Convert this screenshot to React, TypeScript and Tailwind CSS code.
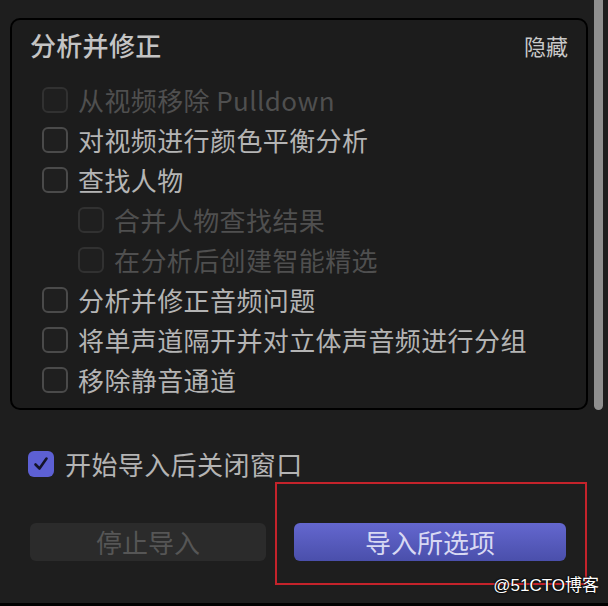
import React from 'react';

type Item = { label: string; disabled?: boolean; sub?: boolean };

const items: Item[] = [
  { label: '从视频移除 Pulldown', disabled: true },
  { label: '对视频进行颜色平衡分析' },
  { label: '查找人物' },
  { label: '合并人物查找结果', disabled: true, sub: true },
  { label: '在分析后创建智能精选', disabled: true, sub: true },
  { label: '分析并修正音频问题' },
  { label: '将单声道隔开并对立体声音频进行分组' },
  { label: '移除静音通道' },
];

const Box = ({ disabled }: { disabled?: boolean }) => (
  <div
    className={
      'w-[26px] h-[26px] shrink-0 rounded-[6px] border-2 bg-[#1f1f1f] ' +
      (disabled ? 'border-[#313131]' : 'border-[#4a4a4a]')
    }
  />
);

const App = () => {
  return (
    <div
      className="relative w-[608px] h-[606px] overflow-hidden bg-[#1e1e1e] border-b-[3px] border-black flex"
      style={{ fontFamily: '"Noto Sans CJK SC", "PingFang SC", sans-serif' }}
    >
      <div className="flex-1 pl-[10px] pr-[6px]">
        {/* analysis panel */}
        <div className="mt-[18px] h-[392px] rounded-[10px] border-2 border-black bg-[#1c1c1c] px-[18px] pt-[12px]">
          <div className="flex items-center justify-between h-[26px]">
            <span className="text-[26px] leading-none font-medium tracking-[0.3px] text-[#c4c4c4]">分析并修正</span>
            <span className="text-[22px] leading-none text-[#c8c8c8]">隐藏</span>
          </div>
          <div className="mt-[22px] pl-[12px]">
            {items.map((item, i) => (
              <div key={i} className={'flex items-center h-[40px] gap-[10px] ' + (item.sub ? 'ml-[36px]' : '')}>
                <Box disabled={item.disabled} />
                <span
                  className={
                    'text-[26px] leading-none whitespace-nowrap tracking-[0.4px] ' +
                    (item.disabled ? 'text-[#4f4f4f]' : 'text-[#b4b4b4]')
                  }
                >
                  {item.label}
                </span>
              </div>
            ))}
          </div>
        </div>

        {/* close window option */}
        <div className="mt-[41px] ml-[18px] flex items-center gap-[11px]">
          <div className="w-[26px] h-[26px] rounded-[6px] bg-[#5d60d4] flex items-center justify-center">
            <svg width="18" height="18" viewBox="0 0 18 18" fill="none">
              <path d="M3.5 9.5 L7.5 13.5 L14.5 3.5" stroke="#14142a" strokeWidth="2.6" strokeLinecap="round" strokeLinejoin="round" />
            </svg>
          </div>
          <span className="text-[26px] leading-none tracking-[0.4px] text-[#b4b4b4]">开始导入后关闭窗口</span>
        </div>

        {/* buttons */}
        <div className="mt-[46px] ml-[20px] flex gap-[28px]">
          <div className="w-[236px] h-[38px] rounded-[6px] bg-[#2b2b2b] flex items-center justify-center text-[26px] leading-none text-[#565656]">
            停止导入
          </div>
          <div className="w-[272px] h-[38px] rounded-[6px] bg-gradient-to-b from-[#6467cf] to-[#4a4fab] flex items-center justify-center text-[26px] leading-none text-[#d8d9f3]">
            导入所选项
          </div>
        </div>
      </div>

      {/* scrollbar */}
      <div className="w-[9px] h-[410px] mr-[5px] rounded-b-full bg-[#8f8f8f]" />

      {/* annotation box */}
      <div className="absolute left-[275px] top-[482px] w-[312px] h-[103px] border-2 border-[#c4232b]" />

      {/* watermark */}
      <div
        className="absolute right-[9px] top-[577px] text-[17px] leading-none text-white"
        style={{ fontFamily: '"Liberation Sans", "Noto Sans CJK SC", sans-serif', textShadow: '0 0 2px #000, 0 0 2px #000' }}
      >
        @51CTO博客
      </div>
    </div>
  );
};

export default App;
